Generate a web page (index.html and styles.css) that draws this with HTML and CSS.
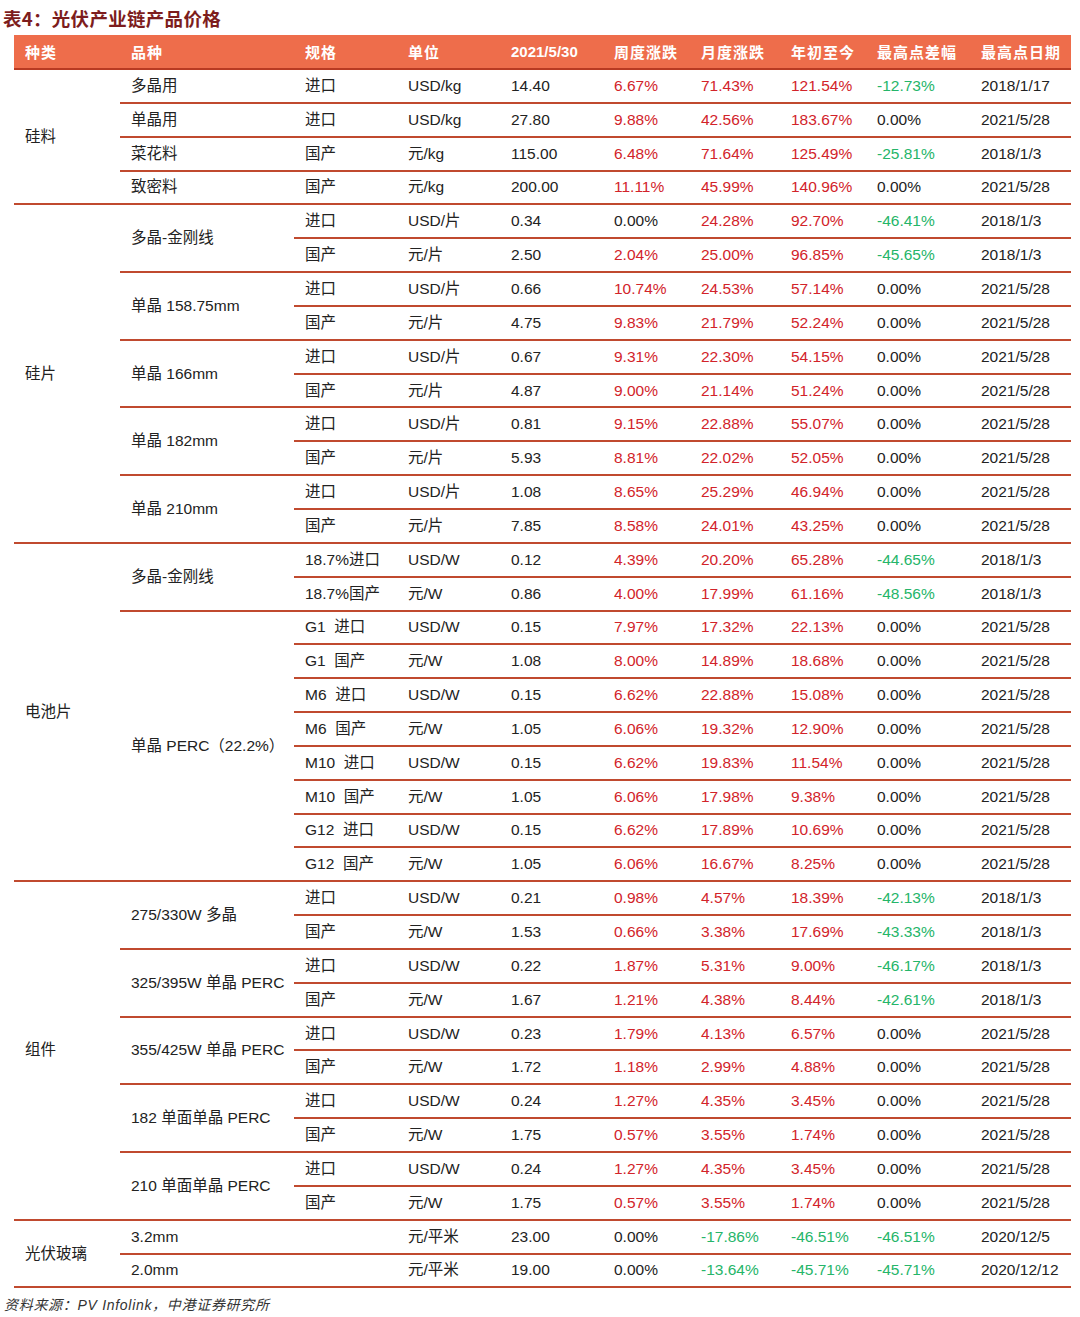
FILE: index.html
```html
<!DOCTYPE html>
<html lang="zh">
<head>
<meta charset="utf-8">
<title>光伏产业链产品价格</title>
<link rel="stylesheet" href="styles.css">
</head>
<body>
<div class="title">表4：光伏产业链产品价格</div>
<table class="price">
<colgroup>
<col class="c1"><col class="c2"><col class="c3"><col class="c4"><col class="c5"><col class="c6"><col class="c7"><col class="c8"><col class="c9"><col class="c10">
</colgroup>
<thead>
<tr><th>种类</th><th>品种</th><th>规格</th><th>单位</th><th class="num">2021/5/30</th><th>周度涨跌</th><th>月度涨跌</th><th>年初至今</th><th>最高点差幅</th><th>最高点日期</th></tr>
</thead>
<tbody>
<tr><td rowspan="4">硅料</td><td>多晶用</td><td>进口</td><td>USD/kg</td><td>14.40</td><td class="r">6.67%</td><td class="r">71.43%</td><td class="r">121.54%</td><td class="g">-12.73%</td><td>2018/1/17</td></tr>
<tr><td>单晶用</td><td>进口</td><td>USD/kg</td><td>27.80</td><td class="r">9.88%</td><td class="r">42.56%</td><td class="r">183.67%</td><td>0.00%</td><td>2021/5/28</td></tr>
<tr><td>菜花料</td><td>国产</td><td>元/kg</td><td>115.00</td><td class="r">6.48%</td><td class="r">71.64%</td><td class="r">125.49%</td><td class="g">-25.81%</td><td>2018/1/3</td></tr>
<tr><td>致密料</td><td>国产</td><td>元/kg</td><td>200.00</td><td class="r">11.11%</td><td class="r">45.99%</td><td class="r">140.96%</td><td>0.00%</td><td>2021/5/28</td></tr>

<tr><td rowspan="10">硅片</td><td rowspan="2">多晶-金刚线</td><td>进口</td><td>USD/片</td><td>0.34</td><td>0.00%</td><td class="r">24.28%</td><td class="r">92.70%</td><td class="g">-46.41%</td><td>2018/1/3</td></tr>
<tr><td>国产</td><td>元/片</td><td>2.50</td><td class="r">2.04%</td><td class="r">25.00%</td><td class="r">96.85%</td><td class="g">-45.65%</td><td>2018/1/3</td></tr>
<tr><td rowspan="2">单晶 158.75mm</td><td>进口</td><td>USD/片</td><td>0.66</td><td class="r">10.74%</td><td class="r">24.53%</td><td class="r">57.14%</td><td>0.00%</td><td>2021/5/28</td></tr>
<tr><td>国产</td><td>元/片</td><td>4.75</td><td class="r">9.83%</td><td class="r">21.79%</td><td class="r">52.24%</td><td>0.00%</td><td>2021/5/28</td></tr>
<tr><td rowspan="2">单晶 166mm</td><td>进口</td><td>USD/片</td><td>0.67</td><td class="r">9.31%</td><td class="r">22.30%</td><td class="r">54.15%</td><td>0.00%</td><td>2021/5/28</td></tr>
<tr><td>国产</td><td>元/片</td><td>4.87</td><td class="r">9.00%</td><td class="r">21.14%</td><td class="r">51.24%</td><td>0.00%</td><td>2021/5/28</td></tr>
<tr><td rowspan="2">单晶 182mm</td><td>进口</td><td>USD/片</td><td>0.81</td><td class="r">9.15%</td><td class="r">22.88%</td><td class="r">55.07%</td><td>0.00%</td><td>2021/5/28</td></tr>
<tr><td>国产</td><td>元/片</td><td>5.93</td><td class="r">8.81%</td><td class="r">22.02%</td><td class="r">52.05%</td><td>0.00%</td><td>2021/5/28</td></tr>
<tr><td rowspan="2">单晶 210mm</td><td>进口</td><td>USD/片</td><td>1.08</td><td class="r">8.65%</td><td class="r">25.29%</td><td class="r">46.94%</td><td>0.00%</td><td>2021/5/28</td></tr>
<tr><td>国产</td><td>元/片</td><td>7.85</td><td class="r">8.58%</td><td class="r">24.01%</td><td class="r">43.25%</td><td>0.00%</td><td>2021/5/28</td></tr>

<tr><td rowspan="10">电池片</td><td rowspan="2">多晶-金刚线</td><td>18.7%进口</td><td>USD/W</td><td>0.12</td><td class="r">4.39%</td><td class="r">20.20%</td><td class="r">65.28%</td><td class="g">-44.65%</td><td>2018/1/3</td></tr>
<tr><td>18.7%国产</td><td>元/W</td><td>0.86</td><td class="r">4.00%</td><td class="r">17.99%</td><td class="r">61.16%</td><td class="g">-48.56%</td><td>2018/1/3</td></tr>
<tr><td rowspan="8">单晶 PERC（22.2%）</td><td>G1&nbsp; 进口</td><td>USD/W</td><td>0.15</td><td class="r">7.97%</td><td class="r">17.32%</td><td class="r">22.13%</td><td>0.00%</td><td>2021/5/28</td></tr>
<tr><td>G1&nbsp; 国产</td><td>元/W</td><td>1.08</td><td class="r">8.00%</td><td class="r">14.89%</td><td class="r">18.68%</td><td>0.00%</td><td>2021/5/28</td></tr>
<tr><td>M6&nbsp; 进口</td><td>USD/W</td><td>0.15</td><td class="r">6.62%</td><td class="r">22.88%</td><td class="r">15.08%</td><td>0.00%</td><td>2021/5/28</td></tr>
<tr><td>M6&nbsp; 国产</td><td>元/W</td><td>1.05</td><td class="r">6.06%</td><td class="r">19.32%</td><td class="r">12.90%</td><td>0.00%</td><td>2021/5/28</td></tr>
<tr><td>M10&nbsp; 进口</td><td>USD/W</td><td>0.15</td><td class="r">6.62%</td><td class="r">19.83%</td><td class="r">11.54%</td><td>0.00%</td><td>2021/5/28</td></tr>
<tr><td>M10&nbsp; 国产</td><td>元/W</td><td>1.05</td><td class="r">6.06%</td><td class="r">17.98%</td><td class="r">9.38%</td><td>0.00%</td><td>2021/5/28</td></tr>
<tr><td>G12&nbsp; 进口</td><td>USD/W</td><td>0.15</td><td class="r">6.62%</td><td class="r">17.89%</td><td class="r">10.69%</td><td>0.00%</td><td>2021/5/28</td></tr>
<tr><td>G12&nbsp; 国产</td><td>元/W</td><td>1.05</td><td class="r">6.06%</td><td class="r">16.67%</td><td class="r">8.25%</td><td>0.00%</td><td>2021/5/28</td></tr>

<tr><td rowspan="10">组件</td><td rowspan="2">275/330W 多晶</td><td>进口</td><td>USD/W</td><td>0.21</td><td class="r">0.98%</td><td class="r">4.57%</td><td class="r">18.39%</td><td class="g">-42.13%</td><td>2018/1/3</td></tr>
<tr><td>国产</td><td>元/W</td><td>1.53</td><td class="r">0.66%</td><td class="r">3.38%</td><td class="r">17.69%</td><td class="g">-43.33%</td><td>2018/1/3</td></tr>
<tr><td rowspan="2">325/395W 单晶 PERC</td><td>进口</td><td>USD/W</td><td>0.22</td><td class="r">1.87%</td><td class="r">5.31%</td><td class="r">9.00%</td><td class="g">-46.17%</td><td>2018/1/3</td></tr>
<tr><td>国产</td><td>元/W</td><td>1.67</td><td class="r">1.21%</td><td class="r">4.38%</td><td class="r">8.44%</td><td class="g">-42.61%</td><td>2018/1/3</td></tr>
<tr><td rowspan="2">355/425W 单晶 PERC</td><td>进口</td><td>USD/W</td><td>0.23</td><td class="r">1.79%</td><td class="r">4.13%</td><td class="r">6.57%</td><td>0.00%</td><td>2021/5/28</td></tr>
<tr><td>国产</td><td>元/W</td><td>1.72</td><td class="r">1.18%</td><td class="r">2.99%</td><td class="r">4.88%</td><td>0.00%</td><td>2021/5/28</td></tr>
<tr><td rowspan="2">182 单面单晶 PERC</td><td>进口</td><td>USD/W</td><td>0.24</td><td class="r">1.27%</td><td class="r">4.35%</td><td class="r">3.45%</td><td>0.00%</td><td>2021/5/28</td></tr>
<tr><td>国产</td><td>元/W</td><td>1.75</td><td class="r">0.57%</td><td class="r">3.55%</td><td class="r">1.74%</td><td>0.00%</td><td>2021/5/28</td></tr>
<tr><td rowspan="2">210 单面单晶 PERC</td><td>进口</td><td>USD/W</td><td>0.24</td><td class="r">1.27%</td><td class="r">4.35%</td><td class="r">3.45%</td><td>0.00%</td><td>2021/5/28</td></tr>
<tr><td>国产</td><td>元/W</td><td>1.75</td><td class="r">0.57%</td><td class="r">3.55%</td><td class="r">1.74%</td><td>0.00%</td><td>2021/5/28</td></tr>

<tr><td rowspan="2">光伏玻璃</td><td colspan="2">3.2mm</td><td>元/平米</td><td>23.00</td><td>0.00%</td><td class="g">-17.86%</td><td class="g">-46.51%</td><td class="g">-46.51%</td><td>2020/12/5</td></tr>
<tr><td colspan="2">2.0mm</td><td>元/平米</td><td>19.00</td><td>0.00%</td><td class="g">-13.64%</td><td class="g">-45.71%</td><td class="g">-45.71%</td><td>2020/12/12</td></tr>
</tbody>
</table>
<div class="source">资料来源：PV Infolink，中港证券研究所</div>
</body>
</html>
```

FILE: styles.css
```css
html, body {
  margin: 0;
  padding: 0;
  background: #ffffff;
}
body {
  font-family: "Liberation Sans", "Noto Sans CJK SC", sans-serif;
  color: #222222;
  width: 1080px;
}
.title {
  height: 35px;
  display: flex;
  align-items: center;
  padding-left: 3px;
  font-family: "Noto Sans CJK SC", sans-serif;
  font-weight: 700;
  font-size: 18.5px;
  color: #7d1d1d;
  letter-spacing: 0.3px;
}
.price {
  margin-left: 14px;
  width: 1057px;
  table-layout: fixed;
  border-collapse: separate;
  border-spacing: 0;
  font-size: 15.5px;
}
.c1 { width: 106px; }
.c2 { width: 174px; }
.c3 { width: 103px; }
.c4 { width: 103px; }
.c5 { width: 103px; }
.c6 { width: 87px; }
.c7 { width: 90px; }
.c8 { width: 86px; }
.c9 { width: 104px; }
.c10 { width: 101px; }
.price thead tr {
  height: 35px;
}
.price th {
  background: #ee6d4b;
  color: #ffffff;
  font-family: "Liberation Sans", "Noto Sans CJK SC", sans-serif;
  font-weight: 700;
  font-size: 15px;
  text-align: left;
  padding: 0 0 0 11px;
  border-bottom: 2px solid #b93a22;
  white-space: nowrap;
  letter-spacing: 1px;
}
.price th.num {
  letter-spacing: 0;
}
.price tbody tr {
  height: 33.85px;
}
.price td {
  padding: 0 0 0 11px;
  text-align: left;
  vertical-align: middle;
  white-space: nowrap;
  border-bottom: 2px solid #c04a2f;
  line-height: 18px;
  color: #222222;
}
.price td.r {
  color: #d2232a;
}
.price td.g {
  color: #25b569;
}
.source {
  padding: 8px 0 0 4px;
  font-size: 14px;
  font-style: italic;
  color: #333333;
  line-height: 18px;
  letter-spacing: 0.7px;
}
```
